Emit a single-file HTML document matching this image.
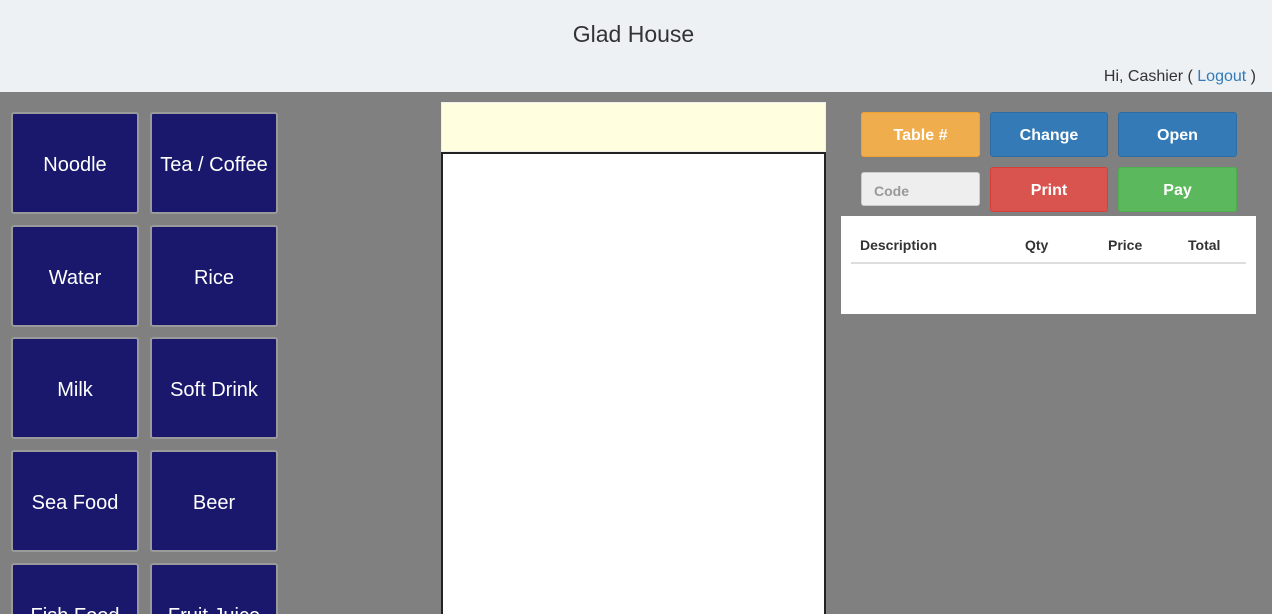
<!DOCTYPE html>
<html style="width:1272px;height:614px;overflow:hidden"><head><style>
*{box-sizing:border-box;margin:0;padding:0}
body{width:1272px;height:614px;overflow:hidden;background:#808080;font-family:"Liberation Sans",sans-serif;position:relative}
.hdr{position:absolute;left:0;top:0;width:1272px;height:92px;background:#edf1f4}
.title{position:absolute;top:21px;left:0;width:1267px;text-align:center;font-size:23px;color:#333}
.hi{position:absolute;right:16px;top:68px;font-size:16px;color:#333}
.hi a{color:#337ab7;text-decoration:none}
.tile{position:absolute;width:128px;height:102px;background:#1a186c;border:2px solid #9a9a9a;border-radius:3px;color:#fff;font-size:20px;display:flex;align-items:center;justify-content:center;padding-top:5px}
.y{position:absolute;left:441px;top:102px;width:385px;height:50px;background:#ffffdf;border:1px solid #eee}
.w{position:absolute;left:441px;top:152px;width:385px;height:462px;background:#fff;border:2px solid #222;border-bottom:none}
.b{position:absolute;width:119px;height:45px;border-radius:3px;color:#fff;font-weight:bold;font-size:16px;display:flex;align-items:center;justify-content:center;padding-top:3px}
.tbl{position:absolute;left:841px;top:216px;width:415px;height:98px;background:#fff}
.th{position:absolute;top:21px;font-weight:bold;font-size:14px;color:#333}
</style></head><body>
<div class="hdr"><div class="title">Glad House</div><div class="hi">Hi, Cashier ( <a>Logout</a> )</div></div>
<div class="tile" style="left:11px;top:112px">Noodle</div>
<div class="tile" style="left:150px;top:112px">Tea / Coffee</div>
<div class="tile" style="left:11px;top:225px">Water</div>
<div class="tile" style="left:150px;top:225px">Rice</div>
<div class="tile" style="left:11px;top:337px">Milk</div>
<div class="tile" style="left:150px;top:337px">Soft Drink</div>
<div class="tile" style="left:11px;top:450px">Sea Food</div>
<div class="tile" style="left:150px;top:450px">Beer</div>
<div class="tile" style="left:11px;top:563px">Fish Food</div>
<div class="tile" style="left:150px;top:563px">Fruit Juice</div>
<div class="y"></div><div class="w"></div>
<div class="b" style="left:861px;top:112px;background:#f0ad4e;border:1px solid #eea236">Table #</div>
<div class="b" style="left:990px;top:112px;width:118px;background:#337ab7;border:1px solid #2e6da4">Change</div>
<div class="b" style="left:1118px;top:112px;background:#337ab7;border:1px solid #2e6da4">Open</div>
<div class="b" style="left:861px;top:172px;height:34px;background:#eee;border:1px solid #ccc;color:#999;justify-content:flex-start;padding-left:12px;font-size:14px">Code</div>
<div class="b" style="left:990px;top:167px;width:118px;background:#d9534f;border:1px solid #d43f3a">Print</div>
<div class="b" style="left:1118px;top:167px;background:#5cb85c;border:1px solid #4cae4c">Pay</div>
<div class="tbl">
<div class="th" style="left:19px">Description</div>
<div class="th" style="left:184px">Qty</div>
<div class="th" style="left:267px">Price</div>
<div class="th" style="left:347px">Total</div>
<div style="position:absolute;left:10px;top:46px;width:395px;height:2px;background:#ddd"></div>
</div>
</body></html>
